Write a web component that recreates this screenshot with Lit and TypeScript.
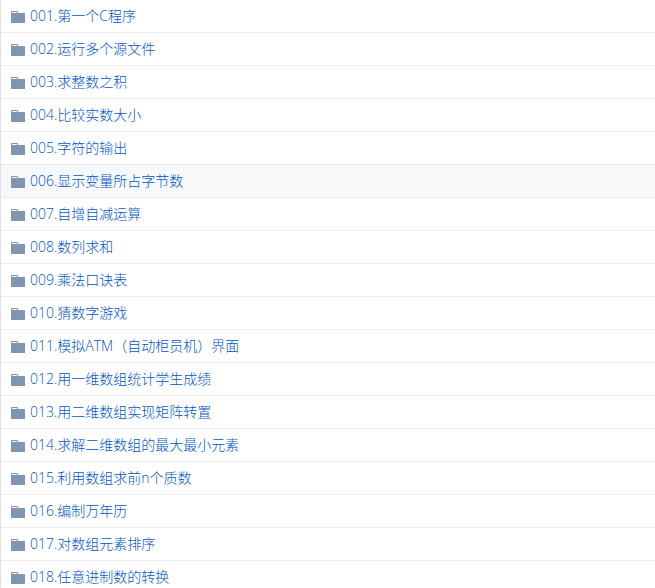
import { LitElement, html, css } from "lit";
import { customElement } from "lit/decorators.js";

const folders = [
  "001.第一个C程序",
  "002.运行多个源文件",
  "003.求整数之积",
  "004.比较实数大小",
  "005.字符的输出",
  "006.显示变量所占字节数",
  "007.自增自减运算",
  "008.数列求和",
  "009.乘法口诀表",
  "010.猜数字游戏",
  "011.模拟ATM（自动柜员机）界面",
  "012.用一维数组统计学生成绩",
  "013.用二维数组实现矩阵转置",
  "014.求解二维数组的最大最小元素",
  "015.利用数组求前n个质数",
  "016.编制万年历",
  "017.对数组元素排序",
  "018.任意进制数的转换",
];
const activeIndex = 5;

@customElement("app-root")
export class AppRoot extends LitElement {
  static styles = css`
    :host {
      display: block;
      background: #fff;
      font-family: "Open Sans", "Noto Sans CJK SC", sans-serif;
      font-size: 14px;
      font-weight: 300;
      line-height: 20px;
    }
    .list {
      margin: 0;
      padding: 0;
      list-style: none;
      border-left: 1px solid #dfe2e5;
    }
    .row {
      display: flex;
      align-items: center;
      gap: 5px;
      padding: 6px 10px;
      border-bottom: 1px solid #eaecef;
    }
    .row.active {
      background: #f6f8fa;
    }
    .icon {
      flex: none;
      width: 14px;
      height: 16px;
      margin-top: 2px;
      fill: #8096b0;
    }
    .link {
      color: #0056c8;
      text-decoration: none;
      white-space: nowrap;
    }
  `;

  render() {
    return html`<ul class="list">
      ${folders.map(
        (name, i) => html`<li class="row ${i === activeIndex ? "active" : ""}">
          <svg class="icon" viewBox="0 0 14 16" aria-hidden="true">
            <path fill-rule="evenodd" d="M13.6 4H7V3c0-.66-.31-1-1-1H.8C.3 2 0 2.4 0 3v10.4c0 .4.2.6.6.6h12.8c.4 0 .6-.2.6-.6V4.5c0-.3-.1-.5-.4-.5zM6 4H1V3h5v1z" />
          </svg>
          <a class="link" href="#">${name}</a>
        </li>`
      )}
    </ul>`;
  }
}
